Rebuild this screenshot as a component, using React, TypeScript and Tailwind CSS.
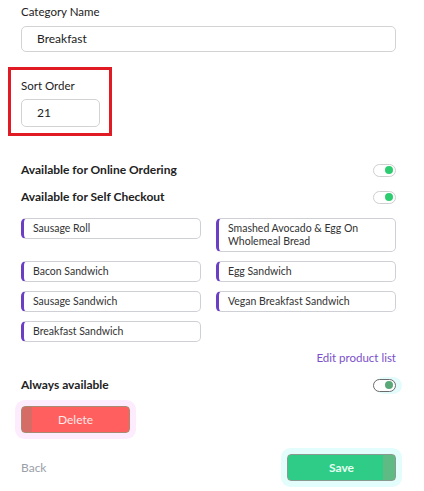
const products = [
  'Sausage Roll',
  'Smashed Avocado & Egg On Wholemeal Bread',
  'Bacon Sandwich',
  'Egg Sandwich',
  'Sausage Sandwich',
  'Vegan Breakfast Sandwich',
  'Breakfast Sandwich',
];

function Toggle({ dim = false }: { dim?: boolean }) {
  return (
    <div
      className={`flex h-[13px] w-[23px] items-center justify-end rounded-full border bg-white pr-[2px] ${
        dim ? 'border-[#6b6b6b] shadow-[4px_0_0_2px_#e4fbfb]' : 'border-[#cfcfcf]'
      }`}
    >
      <div className={`h-[8px] w-[8px] rounded-full ${dim ? 'bg-[#5aa878]' : 'bg-[#2ecc71]'}`} />
    </div>
  );
}

export default function App() {
  return (
    <div className="min-h-screen bg-white px-[21px] pt-[4px] text-[#222] [font-family:Lato,sans-serif]">
      <label className="block text-[11.5px] leading-[16px]">Category Name</label>
      <div className="mt-[6px] flex h-[26px] w-[375px] items-center rounded-[5px] border border-[#d3d3d3] pl-[15px] text-[12px]">
        Breakfast
      </div>

      {/* highlighted sort order */}
      <div className="ml-[-13px] mt-[15px] h-[69px] w-[104px] border-[3px] border-[#e01b24] pl-[10px] pt-[8px]">
        <label className="block text-[11.5px] leading-[16px]">Sort Order</label>
        <div className="mt-[5px] flex h-[28px] w-[79px] items-center rounded-[5px] border border-[#d3d3d3] pl-[15px] text-[12px]">
          21
        </div>
      </div>

      <div className="mt-[26px] flex w-[375px] items-center justify-between">
        <span className="text-[12px] font-bold leading-[16px]">Available for Online Ordering</span>
        <Toggle />
      </div>
      <div className="mt-[11px] flex w-[375px] items-center justify-between">
        <span className="text-[12px] font-bold leading-[16px]">Available for Self Checkout</span>
        <Toggle />
      </div>

      <div className="mt-[13px] grid w-[375px] grid-cols-[180px_180px] items-start justify-between gap-y-[9px]">
        {products.map((p) => (
          <div
            key={p}
            className="rounded-[5px] border border-l-[3px] border-[#cfcfd6] border-l-[#6a3fc4] py-[3px] pl-[9px] pr-[6px] text-[10.5px] leading-[13px] text-[#333]"
          >
            {p}
          </div>
        ))}
      </div>

      <div className="mt-[8px] w-[375px] text-right text-[11.5px] leading-[16px] text-[#7b4fc9]">Edit product list</div>

      <div className="mt-[11px] flex w-[375px] items-center justify-between">
        <span className="text-[12px] font-bold leading-[16px]">Always available</span>
        <Toggle dim />
      </div>

      <button className="mt-[13px] flex h-[27px] w-[109px] items-center justify-center rounded-[4px] border border-[#a88a72] bg-[linear-gradient(to_right,#d56c66_10px,#ff5f5f_10px)] text-[12px] text-[#fde8e8] shadow-[0_0_0_6px_#fdecfd]">
        Delete
      </button>

      <div className="mt-[21px] flex w-[375px] items-center justify-between">
        <span className="text-[12px] text-[#9aa0a8]">Back</span>
        <button className="flex h-[27px] w-[109px] items-center justify-center rounded-[4px] border border-[#8a9a90] bg-[linear-gradient(to_left,#5fbb84_12px,#2ecc87_12px)] text-[12px] font-bold text-[#e8fff2] shadow-[0_0_0_6px_#e3fcfc]">
          Save
        </button>
      </div>
    </div>
  );
}
